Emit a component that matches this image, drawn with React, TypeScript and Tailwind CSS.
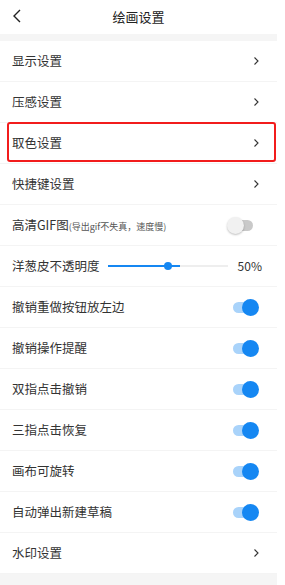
import React, { useState } from "react";

type Row =
  | { kind: "link"; label: string; marked?: boolean }
  | { kind: "toggle"; label: string; sub?: string; on: boolean }
  | { kind: "slider"; label: string; value: number };

const rows: Row[] = [
  { kind: "link", label: "显示设置" },
  { kind: "link", label: "压感设置" },
  { kind: "link", label: "取色设置", marked: true },
  { kind: "link", label: "快捷键设置" },
  { kind: "toggle", label: "高清GIF图", sub: "(导出gif不失真，速度慢)", on: false },
  { kind: "slider", label: "洋葱皮不透明度", value: 50 },
  { kind: "toggle", label: "撤销重做按钮放左边", on: true },
  { kind: "toggle", label: "撤销操作提醒", on: true },
  { kind: "toggle", label: "双指点击撤销", on: true },
  { kind: "toggle", label: "三指点击恢复", on: true },
  { kind: "toggle", label: "画布可旋转", on: true },
  { kind: "toggle", label: "自动弹出新建草稿", on: true },
  { kind: "link", label: "水印设置" },
];

const Chevron = () => (
  <svg width="8" height="10" viewBox="0 0 8 10" className="mr-[17px]">
    <path d="M2.5 1.5 L6 5 L2.5 8.5" fill="none" stroke="#333" strokeWidth="1.1" />
  </svg>
);

// on: track 233-251, knob 242-259 ; off: knob 227-243, track 236-252
const Toggle = ({ on }: { on: boolean }) => (
  <div className="relative w-[32px] h-[17px] mr-[18px]">
    {on ? (
      <>
        <div className="absolute left-[6px] top-[3px] w-[20px] h-[11px] rounded-full bg-[#a9d3fa]" />
        <div className="absolute left-[15px] top-0 w-[17px] h-[17px] rounded-full bg-[#1587f2]" />
      </>
    ) : (
      <>
        <div className="absolute left-[8px] top-[3px] w-[18px] h-[11px] rounded-full bg-[#c9c9c9]" />
        <div className="absolute left-0 top-0 w-[17px] h-[17px] rounded-full bg-[#f1f1f1] shadow-[0_1px_2px_rgba(0,0,0,0.25)]" />
      </>
    )}
  </div>
);

export default function App() {
  const [value] = useState(50);

  return (
    <div
      className="w-[285px] h-[585px] bg-white overflow-hidden"
      style={{ fontFamily: '"Noto Sans CJK SC", "Noto Sans", sans-serif' }}
    >
      <div className="w-[277px]">
        <div className="relative h-[34px] flex items-center justify-center">
          <svg width="10" height="14" viewBox="0 0 10 14" className="absolute left-[12px] top-[9px]">
            <path d="M8 1 L2 7 L8 13" fill="none" stroke="#222" strokeWidth="1.4" />
          </svg>
          <span className="text-[13px] text-[#222]">绘画设置</span>
        </div>
        <div className="h-[7px] bg-[#f5f5f5]" />

        {rows.map((r, i) => (
          <div
            key={i}
            className="relative h-[41px] flex items-center justify-between pl-[12px] border-b border-[#f4f4f4]"
          >
            {r.kind === "slider" ? (
              <div className="flex items-center w-full">
                <span className="text-[12.5px] text-[#333] w-[96px] shrink-0">{r.label}</span>
                <div className="relative w-[120px] h-[2px] bg-[#eeeeee]">
                  <div className="absolute left-0 top-0 h-[2px] bg-[#1587f2]" style={{ width: value * 1.2 + "%" }} />
                  <div
                    className="absolute top-[-3px] w-[8px] h-[8px] rounded-full bg-[#1587f2]"
                    style={{ left: value * 1.2 - 4 + "px" }}
                  />
                </div>
                <span className="ml-auto mr-[15px] text-[12px] text-[#333]">{r.value}%</span>
              </div>
            ) : (
              <>
                <span className="text-[12.5px] text-[#333]">
                  {r.label}
                  {r.kind === "toggle" && r.sub ? (
                    <span className="text-[9px] text-[#555]">{r.sub}</span>
                  ) : null}
                </span>
                {r.kind === "link" ? <Chevron /> : <Toggle on={r.on} />}
              </>
            )}
            {r.kind === "link" && r.marked ? (
              <div className="absolute left-[7px] right-[1px] top-[-1px] bottom-[1px] border-2 border-[#f21c1c] rounded-[3px]" />
            ) : null}
          </div>
        ))}

        <div className="h-[20px] bg-[#f5f5f5]" />
      </div>
    </div>
  );
}
